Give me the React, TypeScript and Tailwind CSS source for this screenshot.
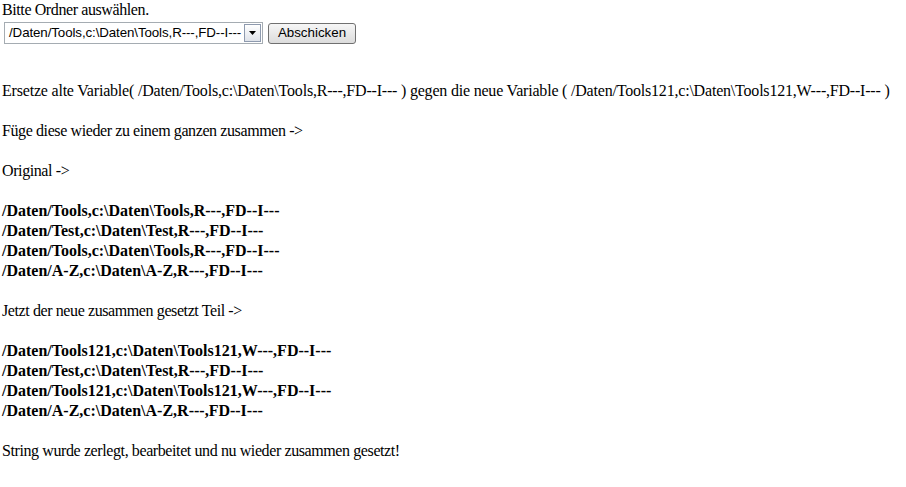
import React from 'react';

const ORIGINAL = [
  '/Daten/Tools,c:\\Daten\\Tools,R---,FD--I---',
  '/Daten/Test,c:\\Daten\\Test,R---,FD--I---',
  '/Daten/Tools,c:\\Daten\\Tools,R---,FD--I---',
  '/Daten/A-Z,c:\\Daten\\A-Z,R---,FD--I---',
];

const NEU = [
  '/Daten/Tools121,c:\\Daten\\Tools121,W---,FD--I---',
  '/Daten/Test,c:\\Daten\\Test,R---,FD--I---',
  '/Daten/Tools121,c:\\Daten\\Tools121,W---,FD--I---',
  '/Daten/A-Z,c:\\Daten\\A-Z,R---,FD--I---',
];

function Blank() {
  return <div className="h-5" />;
}

function FakeSelect() {
  return (
    <div className="flex h-[22px] w-[259px] items-stretch border border-[#a5acb2] bg-white p-px">
      <div className="flex flex-1 items-center overflow-hidden whitespace-nowrap pl-[3px] text-[13.33px] leading-none tracking-[-0.1px] text-black">
        /Daten/Tools,c:\Daten\Tools,R---,FD--I---
      </div>
      <div className="flex w-[17px] shrink-0 items-center justify-center border border-[#8e9aae] bg-gradient-to-b from-[#ffffff] to-[#dfe3ea]">
        <svg width="7" height="4" viewBox="0 0 7 4" aria-hidden>
          <path d="M0 0h7L3.5 4z" fill="#000" />
        </svg>
      </div>
    </div>
  );
}

export default function App() {
  return (
    <div className="min-h-screen bg-white text-black font-['Liberation_Serif','Times_New_Roman',serif] text-[16px] leading-[20px] tracking-[-0.4px] whitespace-nowrap">
      <div className="pl-[2px]">Bitte Ordner auswählen.</div>
      <div className="mt-[2px] flex items-center gap-[5px] pl-1 font-['Liberation_Sans',Arial,sans-serif] tracking-normal">
        <FakeSelect />
        <button
          type="button"
          className="h-[21px] w-[88px] rounded-[3px] border border-[#707070] bg-gradient-to-b from-[#f6f6f6] to-[#dcdcdc] text-[13.33px] leading-none text-black"
        >
          Abschicken
        </button>
      </div>
      <div className="mt-[37px] pl-[2px]">
        <div className="tracking-[-0.2px]">
          Ersetze alte Variable( /Daten/Tools,c:\Daten\Tools,R---,FD--I--- ) gegen die neue Variable ( /Daten/Tools121,c:\Daten\Tools121,W---,FD--I--- )
        </div>
        <Blank />
        <div>Füge diese wieder zu einem ganzen zusammen -&gt;</div>
        <Blank />
        <div>Original -&gt;</div>
        <Blank />
        {ORIGINAL.map((line, i) => (
          <div key={i} className="font-bold tracking-normal">{line}</div>
        ))}
        <Blank />
        <div>Jetzt der neue zusammen gesetzt Teil -&gt;</div>
        <Blank />
        {NEU.map((line, i) => (
          <div key={i} className="font-bold tracking-normal">{line}</div>
        ))}
        <Blank />
        <div>String wurde zerlegt, bearbeitet und nu wieder zusammen gesetzt!</div>
      </div>
    </div>
  );
}
